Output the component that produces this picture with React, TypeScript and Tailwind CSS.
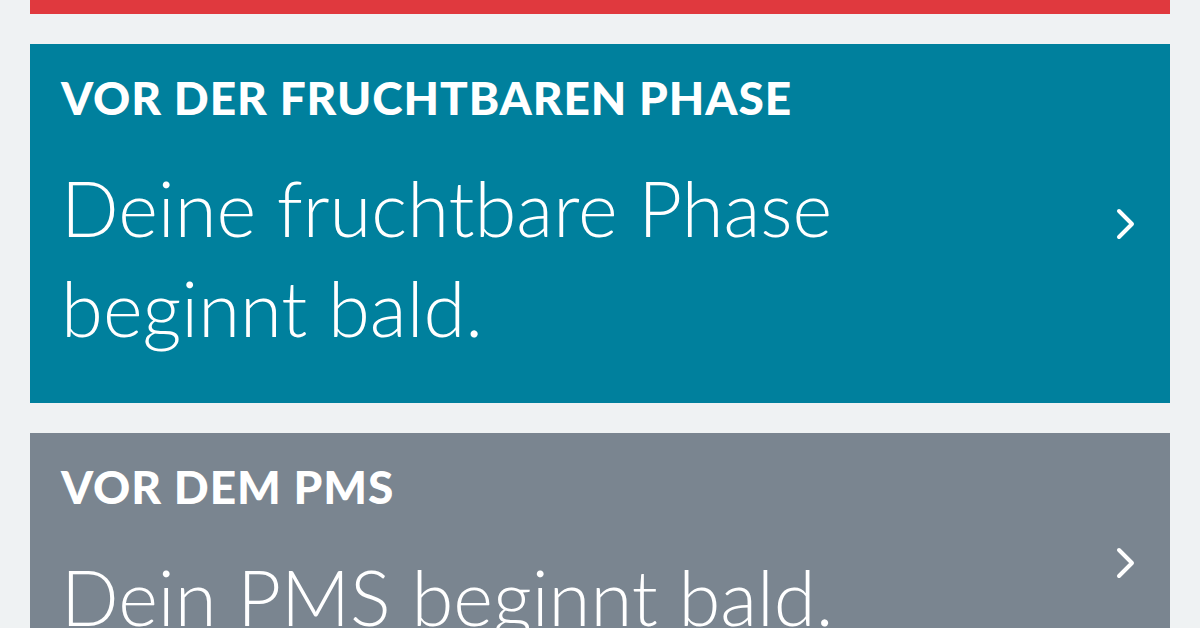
import React from "react";

function Chevron() {
  return (
    <svg width="24" height="36" viewBox="0 0 24 36" fill="none" className="shrink-0">
      <path d="M5 5 L18 18 L5 31" stroke="white" strokeWidth="4" strokeLinecap="round" strokeLinejoin="round" />
    </svg>
  );
}

function Card({ bg, title, lines }: { bg: string; title: string; lines: string[] }) {
  return (
    <div className={`${bg} flex items-center pl-[31px] pr-[32px]`}>
      <div className="flex-1 pt-[26px] pb-[45px]">
        <div className="text-[46px] font-black leading-[56px] tracking-[0.9px] text-white">{title}</div>
        <div className="mt-[32px] text-[76px] font-light leading-[100px] text-white">
          {lines.map((l, i) => (
            <div key={i}>{l}</div>
          ))}
        </div>
      </div>
      <Chevron />
    </div>
  );
}

export default function App() {
  return (
    <div className="w-[1200px] h-[628px] overflow-hidden bg-[#eff2f3] px-[30px]" style={{ fontFamily: "Lato, 'Open Sans', sans-serif" }}>
      <div className="flex flex-col gap-[30px]">
        <div className="h-[14px] bg-[#e0393e]" />
        <Card bg="bg-[#00809d]" title="VOR DER FRUCHTBAREN PHASE" lines={["Deine fruchtbare Phase", "beginnt bald."]} />
        <Card bg="bg-[#7a8590]" title="VOR DEM PMS" lines={["Dein PMS beginnt bald."]} />
      </div>
    </div>
  );
}
